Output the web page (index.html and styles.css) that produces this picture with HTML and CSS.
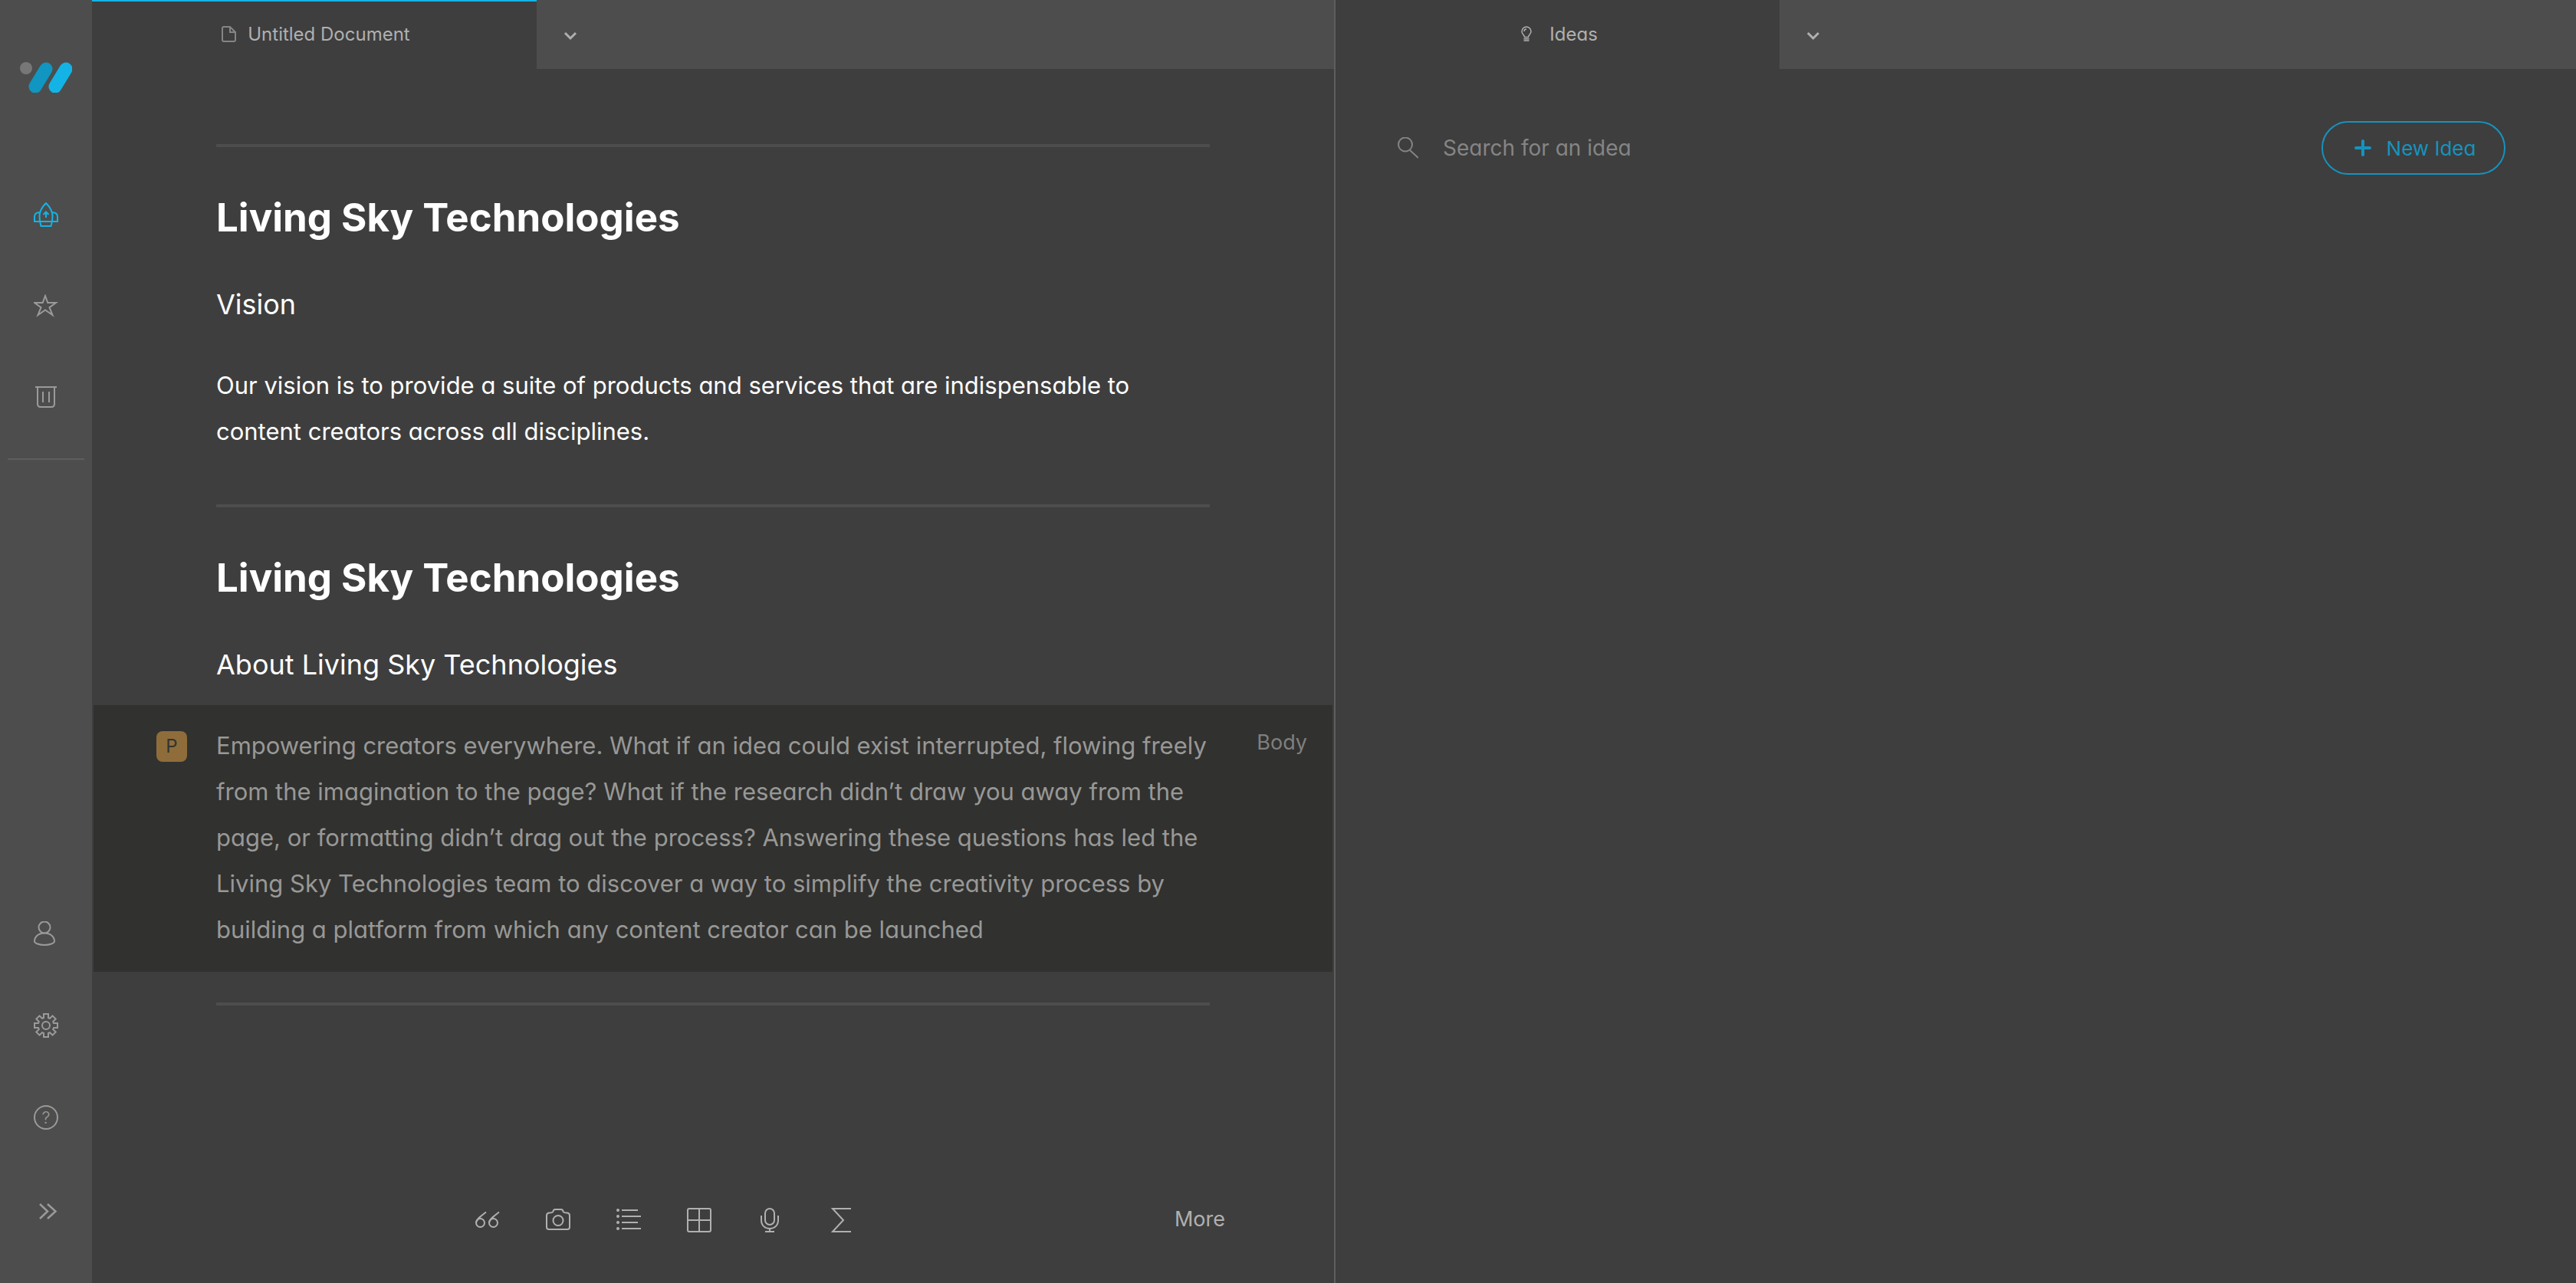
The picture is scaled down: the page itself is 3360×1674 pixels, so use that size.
FILE: index.html
```html
<!DOCTYPE html>
<html lang="en">
<head>
<meta charset="utf-8">
<title>Untitled Document</title>
<link rel="stylesheet" href="styles.css">
</head>
<body>
<div class="app">
  <aside class="sidebar">
    <a class="logo" href="#" aria-label="Home">
      <svg width="68" height="40" viewBox="0 0 68 40">
        <circle cx="8" cy="8" r="8" fill="#777777" stroke="none"/>
        <path d="M34 9L20 32" stroke="#1195c1" stroke-width="17" stroke-linecap="round"/>
        <path d="M60 9L46 32" stroke="#14b3e6" stroke-width="17" stroke-linecap="round"/>
      </svg>
    </a>
    <nav class="nav" aria-label="Main">
      <button class="nav-button active" type="button" aria-label="Launch">
        <svg class="icon" viewBox="0 0 32 32"><path d="M16 1C11 6 7.500 12 7.500 18C7.500 23 8.500 28 9.500 31H22.500C23.500 28 24.500 23 24.500 18C24.500 12 21 6 16 1ZM8.500 13C4 13 1 15 1 19V25H31V19C31 15 28 13 23.500 13M16 20V13M12.500 16L16 12.500L19.500 16"/></svg>
      </button>
      <button class="nav-button" type="button" aria-label="Favourites">
        <svg class="icon" viewBox="0 0 32 32"><path d="M15 2L18.300 11H29L20.500 17.200L24.500 27L15 20.500L5.500 27L9.500 17.200L1 11H11.700Z"/></svg>
      </button>
      <button class="nav-button" type="button" aria-label="Trash">
        <svg class="icon" viewBox="0 0 32 32"><path d="M2 1H30M5 1V23Q5 27 9 27H23Q27 27 27 23V1M12 7V21M20 7V21"/></svg>
      </button>
    </nav>
    <hr class="nav-rule">
    <nav class="nav nav-bottom" aria-label="Account">
      <button class="nav-button" type="button" aria-label="Profile">
        <svg class="icon" viewBox="0 0 32 32"><circle cx="14" cy="8" r="7.500"/><path d="M1 26.500C1 20 6.500 15.500 14 15.500S27 20 27 26.500C27 28.500 21 31 14 31S1 28.500 1 26.500Z"/></svg>
      </button>
      <button class="nav-button" type="button" aria-label="Settings">
        <svg class="icon" viewBox="0 0 32 32"><path d="M13 6V1H19V6L21 6.800L24.500 3.300L28.700 7.500L25.200 11L26 13H31V19H26L25.200 21L28.700 24.500L24.500 28.700L21 25.200L19 26V31H13V26L11 25.200L7.500 28.700L3.300 24.500L6.800 21L6 19H1V13H6L6.800 11L3.300 7.500L7.500 3.300L11 6.800Z"/><circle cx="16" cy="16" r="5"/></svg>
      </button>
      <button class="nav-button" type="button" aria-label="Help">
        <svg class="icon" viewBox="0 0 32 32"><circle cx="16" cy="16" r="15"/><text class="icon-text" x="16" y="24" text-anchor="middle">?</text></svg>
      </button>
      <button class="nav-button" type="button" aria-label="Expand">
        <svg class="icon" viewBox="0 0 32 32"><path stroke-width="2.500" d="M8 9L18 18.500L8 28M18 9L28.500 18.500L18 28"/></svg>
      </button>
    </nav>
  </aside>

  <main class="pane">
    <header class="tabs">
      <button class="tab current" type="button">
        <svg class="tab-icon doc" viewBox="0 0 24 24"><path d="M6 3H15L22 10V20Q22 22 20 22H7Q5 22 5 20V5Q5 3 7 3M15 3V10H22"/></svg>
        Untitled Document
      </button>
      <button class="tab-menu" type="button" aria-label="Document menu">
        <svg width="18" height="12" viewBox="0 0 18 12"><path d="M2 2L9 9L16 2"/></svg>
      </button>
    </header>
    <article class="document">
      <hr>
      <h1>Living Sky Technologies</h1>
      <h2>Vision</h2>
      <p>Our vision is to provide a suite of products and services that are indispensable to content creators across all disciplines.</p>
      <hr>
      <h1>Living Sky Technologies</h1>
      <h2>About Living Sky Technologies</h2>
      <section class="selected">
        <span class="badge">P</span>
        <p>Empowering creators everywhere. What if an idea could exist interrupted, flowing freely from the imagination to the page? What if the research didn’t draw you away from the page, or formatting didn’t drag out the process? Answering these questions has led the Living Sky Technologies team to discover a way to simplify the creativity process by building a platform from which any content creator can be launched</p>
        <span class="style-name">Body</span>
      </section>
      <hr>
    </article>
    <footer class="toolbar">
      <button class="tool" type="button" aria-label="Quote">
        <svg class="icon" viewBox="0 0 32 32"><circle cx="6.500" cy="19.500" r="5.500"/><path d="M14 5.500C8 10 1 14.500 1 20"/><circle cx="23.500" cy="19.500" r="5.500"/><path d="M31 5.500C25 10 18 14.500 18 20"/></svg>
      </button>
      <button class="tool" type="button" aria-label="Photo">
        <svg class="icon" viewBox="0 0 32 32"><path d="M4 6.500C8 6.500 9 6 9.500 4.500C10 2.500 10.500 2 12 2H20C21.500 2 22 2.500 22.500 4.500C23 6 24 6.500 28 6.500Q31 7 31 10V25Q31 28 28 28H4Q1 28 1 25V10Q1 7 4 6.500Z"/><circle cx="16" cy="16.500" r="6.500"/></svg>
      </button>
      <button class="tool" type="button" aria-label="List">
        <svg class="icon" viewBox="0 0 32 32"><path d="M7 3H28M7 11H32M7 19H28M7 27H32"/><g class="dots"><circle cx="2" cy="3" r="2"/><circle cx="2" cy="11" r="2"/><circle cx="2" cy="19" r="2"/><circle cx="2" cy="27" r="2"/></g></svg>
      </button>
      <button class="tool" type="button" aria-label="Table">
        <svg class="icon" viewBox="0 0 32 32"><rect x="1" y="1" width="30" height="30" rx="2"/><path d="M16 1V31M1 16H31"/></svg>
      </button>
      <button class="tool" type="button" aria-label="Dictate">
        <svg class="icon" viewBox="0 0 32 32"><rect x="10" y="1" width="12" height="21" rx="6"/><path d="M5 10V16C5 23 10 27 16 27S27 23 27 16V10M16 27V31M10 31H22"/></svg>
      </button>
      <button class="tool" type="button" aria-label="Formula">
        <svg class="icon" viewBox="0 0 32 32"><path d="M30 1H6L20 16L6 31H30"/></svg>
      </button>
      <button class="more" type="button">More</button>
    </footer>
  </main>

  <section class="pane ideas">
    <header class="tabs">
      <button class="tab" type="button">
        <svg class="tab-icon" viewBox="0 0 24 24"><path stroke-width="1.500" d="M9.500 16.500C9.500 13.500 6 13 6 9A6 6 0 0 1 18 9C18 13 14.500 13.500 14.500 16.500ZM9 9Q9 6 12 6M8.500 18.700H15.500M8.500 21H15.500"/></svg>
        Ideas
      </button>
      <button class="tab-menu" type="button" aria-label="Ideas menu">
        <svg width="18" height="12" viewBox="0 0 18 12"><path d="M2 2L9 9L16 2"/></svg>
      </button>
    </header>
    <div class="idea-bar">
      <label class="search">
        <svg width="28" height="28" viewBox="0 0 28 28" aria-hidden="true"><circle cx="11" cy="9.500" r="9"/><path d="M17 17L28 27"/></svg>
        <input type="search" placeholder="Search for an idea" aria-label="Search for an idea">
      </label>
      <button class="new-idea" type="button">
        <svg width="22" height="22" viewBox="0 0 22 22"><path d="M11 2V20M2 11H20"/></svg>
        New Idea
      </button>
    </div>
  </section>
</div>
</body>
</html>
```
FILE: styles.css
```css
* {
  box-sizing: border-box;
}

body {
  margin: 0;
  background: #3e3e3e;
  color: #ffffff;
  font-family: Inter, "Liberation Sans", sans-serif;
  /* single-storey "a" */
  font-feature-settings: "cv11";
}

button,
input {
  margin: 0;
  padding: 0;
  border: 0;
  background: none;
  color: inherit;
  font: inherit;
  font-feature-settings: inherit;
}

button {
  display: flex;
  align-items: center;
  justify-content: center;
  cursor: pointer;
}

svg {
  display: block;
  flex: none;
  fill: none;
  stroke: currentColor;
  stroke-width: 2;
}

hr {
  margin: 0;
  border: 0;
}

.app {
  display: grid;
  grid-template-columns: 120px 1fr 1fr;
  min-height: 100vh;
}

.icon {
  width: 32px;
  height: 32px;
}

/* Sidebar */

.sidebar {
  display: flex;
  flex-direction: column;
  background: #4d4d4d;
  color: #9a9a9a;
}

.logo {
  display: flex;
  height: 220px;
  padding: 81px 0 0 26px;
}

.nav {
  display: flex;
  flex-direction: column;
}

.nav-button {
  height: 120px;
}

.nav-button.active {
  color: #14b3e6;
}

.nav-rule {
  height: 2px;
  margin: 18px 10px;
  background: #5e5e5e;
}

.nav-bottom {
  margin-top: auto;
  padding-bottom: 36px;
}

.icon-text {
  fill: currentColor;
  stroke: none;
  font-size: 22px;
  font-weight: 300;
}

/* Panes */

.pane {
  display: flex;
  flex-direction: column;
  min-width: 0;
}

.ideas {
  border-left: 2px solid #5e5e5e;
}

.tabs {
  display: flex;
  height: 90px;
  background: #4d4d4d;
}

.tab {
  gap: 14px;
  width: 35.8%;
  padding-bottom: 2px;
  background: #3e3e3e;
  color: #b0b0b0;
  font-size: 24px;
}

.tab.current {
  border-top: 2px solid #14b3e6;
  padding-bottom: 4px;
}

.ideas .tab {
  gap: 18px;
}

.tab-icon {
  width: 24px;
  height: 24px;
}

.tab-icon.doc {
  color: #858585;
}

.tab-menu {
  width: 88px;
  padding-top: 4px;
  color: #b0b0b0;
}

.tab-menu svg {
  stroke-width: 3;
}

/* Document */

.document {
  flex: 1;
  padding: 98px 162px 0;
}

.document hr {
  height: 4px;
  background: #4d4d4d;
}

.document h1 {
  margin: 62px 0 59px;
  font-size: 51px;
  font-weight: 700;
  line-height: 60px;
}

.document h2 {
  margin: 0 0 52px;
  font-size: 36px;
  font-weight: 400;
  line-height: 48px;
}

.document p {
  margin: 0 0 65px;
  font-size: 31px;
  line-height: 60px;
}

.document .selected {
  display: grid;
  grid-template-columns: 160px 1fr 160px;
  align-items: start;
  margin: -23px -160px 40px;
  padding: 23px 0 25px;
  background: #31312f;
  color: #989896;
}

.document .selected p {
  margin: 0;
}

.badge {
  width: 40px;
  margin: 11px 0 0 82px;
  border-radius: 8px;
  background: #8f6d3b;
  color: #343331;
  font-size: 24px;
  line-height: 40px;
  text-align: center;
}

.style-name {
  padding: 6px 33px 0 0;
  color: #7f7f7e;
  font-size: 27px;
  line-height: 40px;
  text-align: right;
}

.toolbar {
  display: flex;
  align-items: center;
  height: 92px;
  margin-bottom: 36px;
  padding: 0 142px 0 29%;
  color: #b0b0b0;
}

.tool {
  width: 92px;
  height: 92px;
}

.dots {
  fill: currentColor;
  stroke: none;
}

.more {
  margin-left: auto;
  padding-bottom: 3px;
  font-size: 27px;
}

/* Ideas */

.idea-bar {
  display: flex;
  align-items: center;
  gap: 32px;
  padding: 68px 92px 0 80px;
}

.search {
  display: flex;
  flex: 1;
  align-items: center;
  gap: 32px;
  color: #858585;
}

.search input {
  flex: 1;
  height: 40px;
  font-size: 28px;
  outline: 0;
  appearance: none;
}

.search input::placeholder {
  color: #858585;
  opacity: 1;
}

.new-idea {
  gap: 20px;
  width: 240px;
  height: 70px;
  padding-left: 4px;
  border: 2px solid #1593bf;
  border-radius: 35px;
  color: #1593bf;
  font-size: 26px;
}

.new-idea svg {
  stroke-width: 4;
  stroke-linecap: round;
}
```
